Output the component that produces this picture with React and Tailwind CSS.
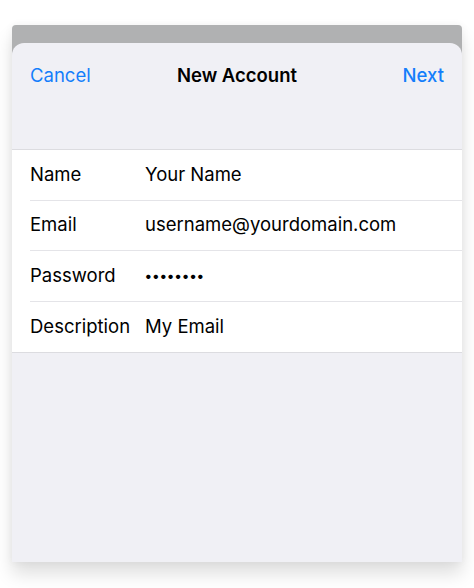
export default function App() {
  const rows = [
    { label: "Name", value: "Your Name" },
    { label: "Email", value: "username@yourdomain.com" },
    { label: "Password", value: "••••••••", secret: true },
    { label: "Description", value: "My Email" },
  ];

  return (
    <div
      className="h-[588px] w-[474px] bg-white pt-[25px] px-[12px]"
      style={{ fontFamily: "Inter, 'Liberation Sans', sans-serif" }}
    >
      <div className="rounded-t-[4px] bg-[#b0b1b2] pt-[18px] shadow-[0_12px_18px_rgba(0,0,0,0.13),0_0_8px_rgba(0,0,0,0.05)]">
        <div className="h-[519px] rounded-t-[12px] bg-[#f0f0f5]">
          <div className="grid h-[66px] grid-cols-[1fr_auto_1fr] items-center px-[18px] text-[18.5px]">
            <span className="justify-self-start text-[#147efb]">Cancel</span>
            <span className="font-semibold text-black">New Account</span>
            <span className="justify-self-end font-medium text-[#147efb]">Next</span>
          </div>
          <div className="h-[40px]" />
          <div className="border-y border-[#dcdce0] bg-white">
            {rows.map((r, i) => (
              <div key={r.label} className="pl-[18px]">
                <div
                  className={`flex h-[50.5px] items-center text-[18.5px] text-black ${
                    i < rows.length - 1 ? "border-b border-[#e4e4e8]" : ""
                  }`}
                >
                  <span className="w-[115px] shrink-0">{r.label}</span>
                  <span className={r.secret ? "text-[14px] font-bold tracking-[0.8px]" : ""}>{r.value}</span>
                </div>
              </div>
            ))}
          </div>
        </div>
      </div>
    </div>
  );
}
